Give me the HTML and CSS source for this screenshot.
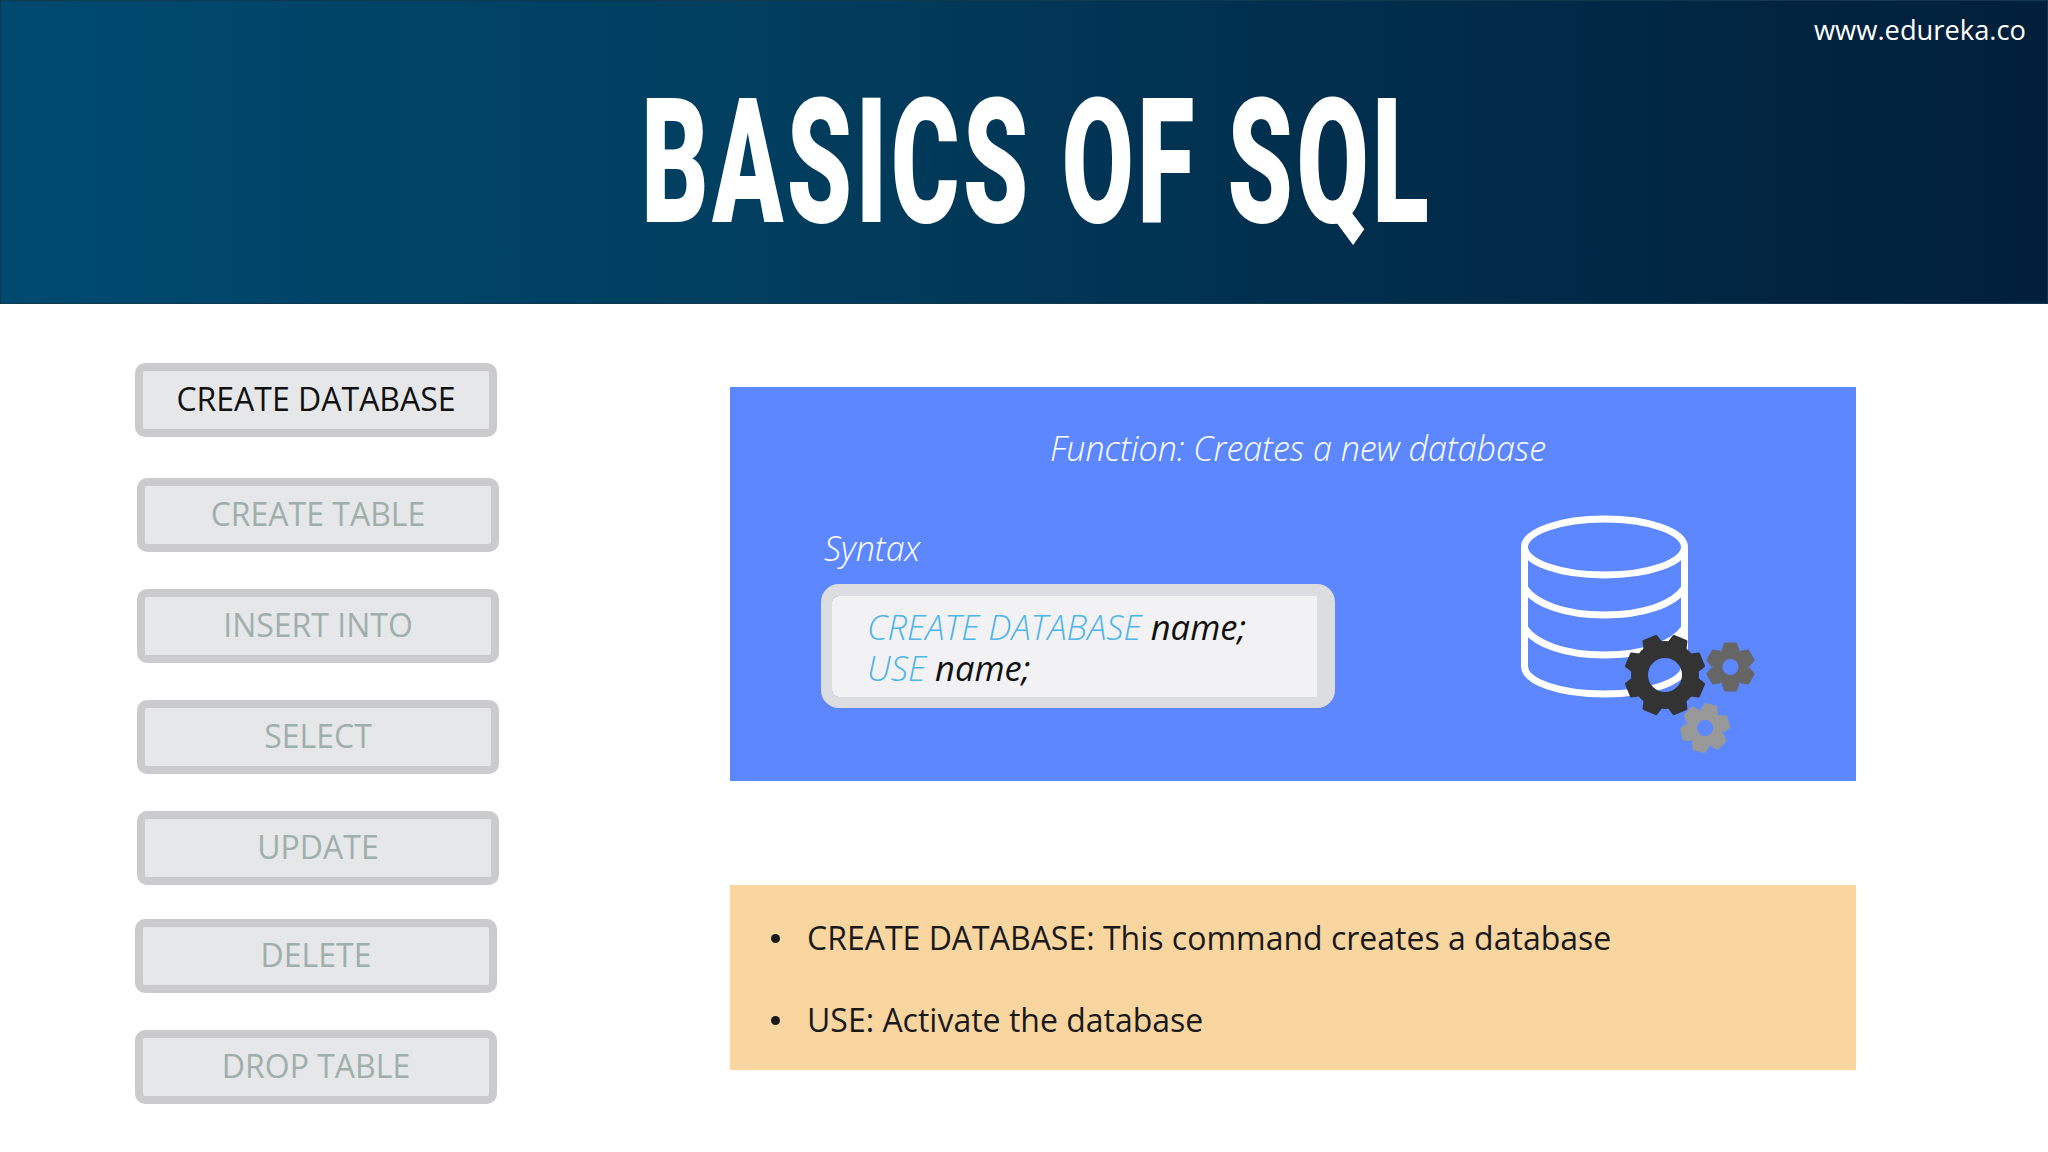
FILE: index.html
```html
<!DOCTYPE html>
<html lang="en">
<head>
    <meta charset="UTF-8">
    <title>Basics of SQL</title>
    <link rel="stylesheet" href="styles.css">
</head>
<body>

<header class="banner">
    <div class="site-link">www.edureka.co</div>
    <h1 class="banner-title">BASICS OF SQL</h1>
</header>

<main class="slide">
    <nav class="cmd-list">
        <div class="cmd cmd-active">CREATE DATABASE</div>
        <div class="cmd cmd-shift cmd-table">CREATE TABLE</div>
        <div class="cmd cmd-shift">INSERT INTO</div>
        <div class="cmd cmd-shift">SELECT</div>
        <div class="cmd cmd-shift">UPDATE</div>
        <div class="cmd cmd-delete">DELETE</div>
        <div class="cmd">DROP TABLE</div>
    </nav>

    <section class="details">
        <div class="blue-panel">
            <div class="panel-title">Function: Creates a new database</div>
            <div class="panel-row">
                <div class="syntax">
                    <div class="syntax-label">Syntax</div>
                    <div class="code-box">
                        <div><span class="kw">CREATE DATABASE</span> name;</div>
                        <div><span class="kw">USE</span> name;</div>
                    </div>
                </div>
                <svg class="db-icon" width="300" height="280" viewBox="0 0 300 280">
                    <defs>
                        <path id="tooth-big" d="M-9 -30 L-6.500 -39 L6.500 -39 L9 -30 Z"/>
                        <path id="tooth-small" d="M-8 -17 L-5.500 -23.500 L5.500 -23.500 L8 -17 Z"/>
                    </defs>
                    <!-- database drum -->
                    <g fill="none" stroke="#fff" stroke-width="7">
                        <ellipse cx="124.500" cy="57" rx="80" ry="28"/>
                        <path d="M44.500 57 V176 C44.500 192 80 204 124.500 204 C169 204 204.500 192 204.500 176 V57"/>
                        <path d="M44.500 98 C55 114 85 125 124.500 125 C164 125 194 114 204.500 98"/>
                        <path d="M44.500 138 C55 154 85 165 124.500 165 C164 165 194 154 204.500 138"/>
                    </g>
                    <!-- big gear -->
                    <g transform="translate(185 185)" fill="#333" stroke="#333" stroke-width="3" stroke-linejoin="round">
                        <circle r="25.500" fill="none" stroke-width="17"/>
                        <use href="#tooth-big" transform="rotate(22.500)"/>
                        <use href="#tooth-big" transform="rotate(67.500)"/>
                        <use href="#tooth-big" transform="rotate(112.500)"/>
                        <use href="#tooth-big" transform="rotate(157.500)"/>
                        <use href="#tooth-big" transform="rotate(202.500)"/>
                        <use href="#tooth-big" transform="rotate(247.500)"/>
                        <use href="#tooth-big" transform="rotate(292.500)"/>
                        <use href="#tooth-big" transform="rotate(337.500)"/>
                    </g>
                    <!-- dark small gear -->
                    <g transform="translate(250.500 177)" fill="#666" stroke="#666" stroke-width="2" stroke-linejoin="round">
                        <circle r="13" fill="none" stroke-width="10"/>
                        <use href="#tooth-small" transform="rotate(0)"/>
                        <use href="#tooth-small" transform="rotate(60)"/>
                        <use href="#tooth-small" transform="rotate(120)"/>
                        <use href="#tooth-small" transform="rotate(180)"/>
                        <use href="#tooth-small" transform="rotate(240)"/>
                        <use href="#tooth-small" transform="rotate(300)"/>
                    </g>
                    <!-- light small gear -->
                    <g transform="translate(225 238)" fill="#999" stroke="#999" stroke-width="2" stroke-linejoin="round">
                        <circle r="13" fill="none" stroke-width="10"/>
                        <use href="#tooth-small" transform="rotate(15)"/>
                        <use href="#tooth-small" transform="rotate(75)"/>
                        <use href="#tooth-small" transform="rotate(135)"/>
                        <use href="#tooth-small" transform="rotate(195)"/>
                        <use href="#tooth-small" transform="rotate(255)"/>
                        <use href="#tooth-small" transform="rotate(315)"/>
                    </g>
                </svg>
            </div>
        </div>

        <ul class="notes">
            <li>CREATE DATABASE: This command creates a database</li>
            <li>USE: Activate the database</li>
        </ul>
    </section>
</main>

</body>
</html>
```

FILE: styles.css
```css
* {
    box-sizing: border-box;
}
html, body {
    margin: 0;
    height: 100%;
    overflow: hidden;
}
body {
    width: 2048px;
    height: 1152px;
    background-color: #fff;
    font-family: "Open Sans", "Noto Sans", sans-serif;
}
.banner {
    height: 304px;
    display: flex;
    flex-direction: column;
    background: linear-gradient(90deg, #004a70 0%, #013f60 35%, #01304f 62%, #011f3a 100%);
    border: 1px solid #12384f;
    color: #fff;
}
.site-link {
    height: 60px;
    padding-right: 21px;
    text-align: right;
    font-size: 27.300px;
    line-height: 58px;
}
.banner-title {
    margin: 0;
    height: 240px;
    text-align: center;
    font-family: Roboto, "Liberation Sans", sans-serif;
    font-weight: 900;
    font-size: 174px;
    line-height: 204px;
    letter-spacing: 6px;
    transform: scaleX(0.6);
    transform-origin: 1055px 0;
    white-space: nowrap;
}
.slide {
    display: flex;
}
.cmd-list {
    width: 730px;
    padding: 59px 0 0 135px;
    display: flex;
    flex-direction: column;
}
.cmd {
    width: 362px;
    height: 74px;
    margin-top: 37px;
    border: 8px solid #cbcbce;
    border-radius: 10px;
    background-color: #e6e7e9;
    color: #9fb0ac;
    text-align: center;
    font-size: 32px;
    line-height: 56px;
}
.cmd-active {
    margin-top: 0;
    color: #111;
}
.cmd-shift {
    margin-left: 2px;
}
.cmd-table {
    margin-top: 41px;
}
.cmd-delete {
    margin-top: 34px;
}
.details {
    width: 1126px;
    padding-top: 83px;
}
.blue-panel {
    height: 394px;
    background-color: #5c87ff;
    color: #fff;
}
.panel-title {
    height: 103px;
    padding: 29px 0 0 10px;
    text-align: center;
    font-size: 34px;
    font-style: italic;
    font-weight: 300;
    line-height: 64px;
}
.panel-row {
    display: flex;
    padding-left: 91px;
}
.syntax {
    width: 514px;
    padding-top: 36px;
}
.syntax-label {
    height: 58px;
    padding-left: 3px;
    font-size: 34px;
    font-style: italic;
    font-weight: 300;
    line-height: 44px;
}
.code-box {
    height: 124px;
    padding: 10px 0 0 35px;
    border-style: solid;
    border-color: #dcdde1;
    border-width: 12px 18px 11px 11px;
    border-radius: 18px;
    background-color: #f2f2f4;
    background-clip: padding-box;
    color: #111;
    font-size: 34.500px;
    font-style: italic;
    line-height: 41px;
}
.kw {
    color: #4db5ea;
    font-weight: 300;
}
.db-icon {
    margin-left: 145px;
    flex: none;
}
.notes {
    height: 185px;
    margin: 104px 0 0;
    padding: 31px 0 0 41px;
    list-style: none;
    background-color: #f9d5a0;
    color: #1a1a1a;
    font-size: 32px;
    line-height: 44px;
}
.notes li {
    display: flex;
    align-items: center;
    gap: 27px;
    margin-bottom: 38px;
}
.notes li::before {
    content: "";
    width: 9px;
    height: 9px;
    border-radius: 50%;
    background-color: #1a1a1a;
}
```
